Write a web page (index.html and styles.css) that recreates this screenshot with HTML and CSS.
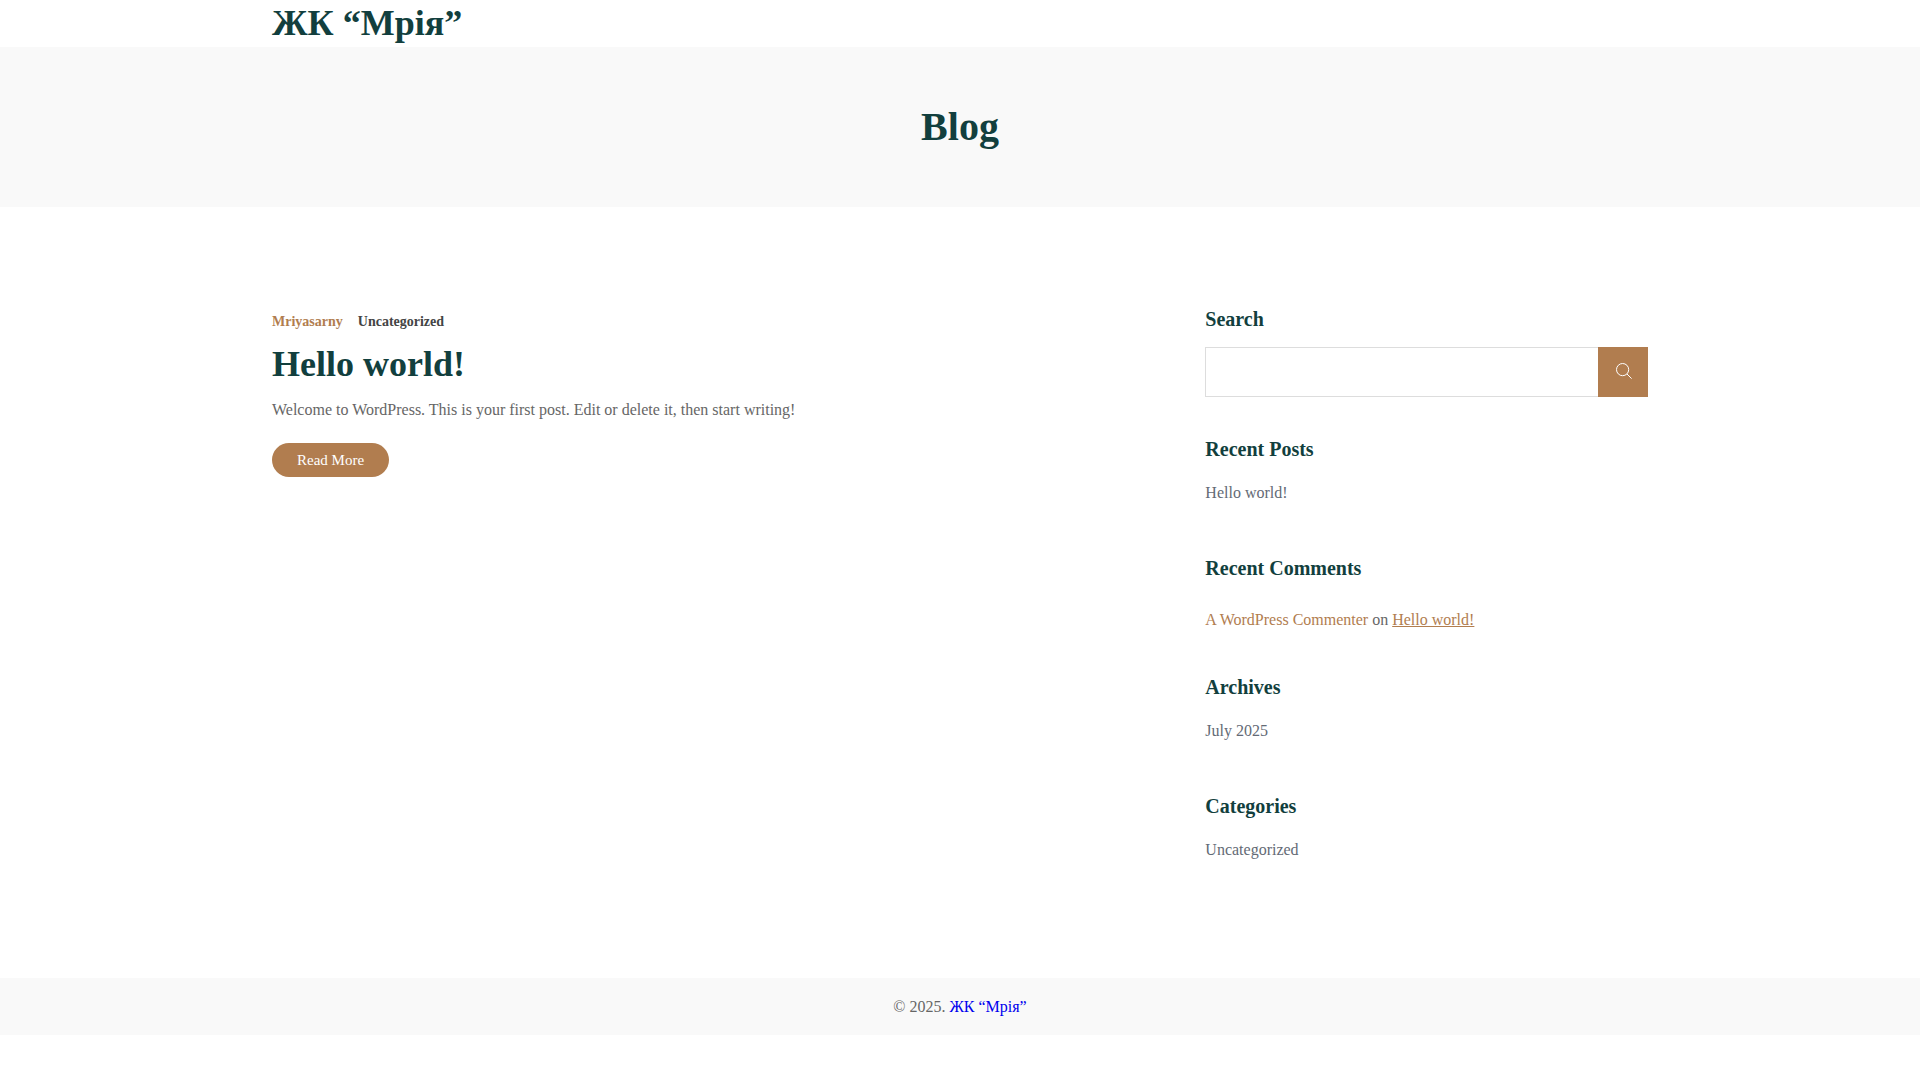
FILE: index.html
```html
<!DOCTYPE html>
<html lang="en">
<head>
<meta charset="utf-8">
<meta name="viewport" content="width=device-width, initial-scale=1">
<title>Blog – ЖК “Мрія”</title>
<link rel="stylesheet" href="styles.css">
</head>
<body>
<header class="site-header">
  <div class="container"><h1 class="site-title"><a href="#">ЖК “Мрія”</a></h1></div>
</header>
<section class="page-banner"><h2 class="page-title">Blog</h2></section>
<main class="container content">
  <article class="post">
    <div class="post-meta"><a class="post-author" href="#">Mriyasarny</a><a class="post-category" href="#">Uncategorized</a></div>
    <h3 class="post-title"><a href="#">Hello world!</a></h3>
    <p class="post-excerpt">Welcome to WordPress. This is your first post. Edit or delete it, then start writing!</p>
    <a class="read-more" href="#">Read More</a>
  </article>
  <aside class="sidebar">
    <form class="widget search-widget">
      <label class="widget-title" for="search">Search</label>
      <div class="search-row">
        <input class="search-input" id="search" type="search">
        <button class="search-button" type="button" aria-label="Search">
          <svg class="search-icon" viewBox="0 0 16 16" aria-hidden="true"><circle cx="6.6" cy="6.6" r="6.1"/><path d="M11 11 15.6 15.6"/></svg>
        </button>
      </div>
    </form>
    <section class="widget"><h4 class="widget-title">Recent Posts</h4><ul class="widget-list"><li><a href="#">Hello world!</a></li></ul></section>
    <section class="widget"><h4 class="widget-title">Recent Comments</h4><p class="comment"><a class="comment-author" href="#">A WordPress Commenter</a> on <a class="comment-post" href="#">Hello world!</a></p></section>
    <section class="widget"><h4 class="widget-title">Archives</h4><ul class="widget-list"><li><a href="#">July 2025</a></li></ul></section>
    <section class="widget"><h4 class="widget-title">Categories</h4><ul class="widget-list"><li><a href="#">Uncategorized</a></li></ul></section>
  </aside>
</main>
<footer class="site-footer">© 2025. <a class="footer-link" href="#">ЖК “Мрія”</a></footer>
</body>
</html>
```
FILE: styles.css
```css
* { box-sizing: border-box; }

body {
  margin: 0;
  background: #fff;
  color: #666;
  font-family: "Liberation Serif", "Times New Roman", serif;
  font-size: 16px;
  line-height: 26px;
}

h1, h2, h3, h4, p, ul { margin: 0; padding: 0; }
ul { list-style: none; }
a { color: inherit; text-decoration: none; }

.container {
  max-width: 1400px;
  margin: 0 auto;
  padding: 0 12px;
}

.site-title {
  color: #123f3e;
  font-size: 36px;
  line-height: 47px;
}

.page-banner {
  padding: 54px 12px;
  background: #f9f9f9;
  text-align: center;
}

.page-title {
  color: #123f3e;
  font-size: 40px;
  line-height: 52px;
}

.content {
  display: grid;
  grid-template-columns: repeat(12, minmax(0, 1fr));
  column-gap: 24px;
  padding-top: 100px;
  padding-bottom: 105px;
}

.post { grid-column: span 8; }

.post-meta {
  display: flex;
  gap: 15px;
  padding-top: 2px;
  font-size: 14px;
  font-weight: 700;
}

.post-author { color: #b17d4f; }
.post-category { color: #444; }

.post-title {
  margin-top: 6px;
  color: #123f3e;
  font-size: 36px;
  line-height: 47px;
}

.post-excerpt { margin-top: 9px; }

.read-more {
  display: inline-block;
  margin-top: 20px;
  padding: 4px 25px;
  border-radius: 30px;
  background: #b17d4f;
  color: #fff;
  font-size: 15px;
}

.sidebar {
  grid-column: span 4;
  display: grid;
  gap: 40px;
}

.widget-title {
  display: block;
  margin-bottom: 15px;
  color: #123f3e;
  font-size: 20px;
  font-weight: 700;
  line-height: 25px;
}

.search-row { display: flex; }

.search-input {
  flex: 1;
  min-width: 0;
  height: 50px;
  padding: 0 15px;
  border: 1px solid #ddd;
  border-right: 0;
  border-radius: 0;
  outline: 0;
  background: #fff;
  font: inherit;
}

.search-button {
  display: grid;
  place-items: center;
  width: 50px;
  height: 50px;
  padding: 0 0 2px 2px;
  border: 0;
  background: #b17d4f;
  color: #fff;
}

.search-icon {
  width: 16px;
  height: 16px;
  fill: none;
  stroke: currentColor;
}

.widget-list {
  padding: 3px 0 10px;
  color: #636a75;
}

.comment { padding: 11px 0 2px; }
.comment-author, .comment-post { color: #b17d4f; }
.comment-post { text-decoration: underline; }

.site-footer {
  padding: 15px 12px;
  background: #f9f9f9;
  line-height: 27px;
  text-align: center;
}

.footer-link { color: #00e; }
```
